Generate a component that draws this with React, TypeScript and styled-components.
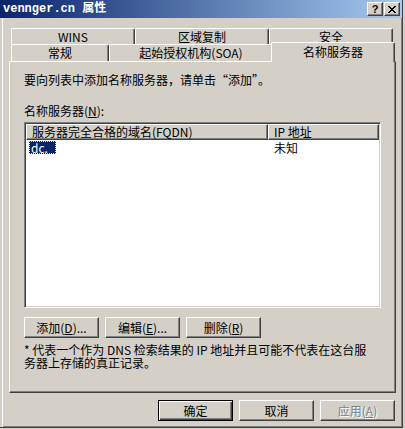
import React from 'react';
import styled, { createGlobalStyle, css } from 'styled-components';

const face = '#D4D0C8';
const shadow = '#808080';
const dark = '#404040';
const cjk = '"Noto Sans CJK SC", "Liberation Sans", sans-serif';

const GlobalStyle = createGlobalStyle`
  html, body {
    margin: 0;
    padding: 0;
    background: ${face};
    overflow: hidden;
  }
  body {
    font-family: ${cjk};
    font-size: 12px;
    color: #000;
  }
`;

const Window = styled.div`
  width: 403px;
  height: 428px;
  box-sizing: border-box;
  display: flex;
  flex-direction: column;
  background: ${face};
  border-right: 1px solid ${dark};
  border-bottom: 1px solid ${dark};
  box-shadow: inset 2px 0 0 ${face}, inset 3px 0 0 #fff,
    inset -1px -1px 0 ${shadow};
`;

const TitleBar = styled.div`
  height: 18px;
  flex: none;
  display: flex;
  align-items: center;
  justify-content: space-between;
  padding: 0 2px 0 3px;
  background: linear-gradient(to right, #0a246a, #a6caf0);
`;

const Title = styled.span`
  font-family: "Liberation Mono", "Noto Sans CJK SC", monospace;
  font-weight: bold;
  font-size: 12px;
  line-height: 14px;
  color: #fff;
`;

const CaptionButtons = styled.div`
  display: flex;
  gap: 1px;
`;

const CaptionButton = styled.div`
  width: 16px;
  height: 14px;
  box-sizing: border-box;
  display: flex;
  align-items: center;
  justify-content: center;
  background: ${face};
  border: 1px solid;
  border-color: #fff ${dark} ${dark} #fff;
  box-shadow: inset -1px -1px 0 ${shadow};
  font-family: "Liberation Sans", sans-serif;
  font-weight: bold;
  font-size: 11px;
  line-height: 11px;
  color: #000;
`;

const Body = styled.div`
  flex: 1;
  display: flex;
  flex-direction: column;
  padding: 10px 6px 0 9px;
`;

const Tabs = styled.div`
  padding-left: 2px;
  display: flex;
  flex-direction: column;
`;

const TabRow = styled.div<{ $h: number }>`
  display: flex;
  height: ${({ $h }) => $h}px;
`;

const Tab = styled.div<{ $w: number; $active?: boolean }>`
  width: ${({ $w }) => $w}px;
  flex: none;
  box-sizing: border-box;
  height: 100%;
  display: flex;
  align-items: center;
  justify-content: center;
  background: ${face};
  border-top: 1px solid #fff;
  border-left: 1px solid #fff;
  border-right: 1px solid ${dark};
  border-radius: 2px 2px 0 0;
  box-shadow: inset -1px 0 0 ${shadow};
  line-height: 12px;
  white-space: nowrap;
  ${({ $active }) =>
    $active &&
    css`
      position: relative;
      z-index: 1;
      height: auto;
      margin: -2px -2px -1px -2px;
      width: ${({ $w }: { $w: number }) => $w + 4}px;
      padding-bottom: 2px;
    `}
`;

const Panel = styled.div`
  height: 332px;
  box-sizing: border-box;
  border-top: 1px solid #fff;
  border-left: 1px solid #fff;
  border-right: 1px solid ${dark};
  border-bottom: 1px solid ${dark};
  box-shadow: inset -1px -1px 0 ${shadow};
  padding: 11px 14px 0 14px;
  display: flex;
  flex-direction: column;
`;

const Text = styled.div<{ $mt?: number }>`
  line-height: 14px;
  margin-top: ${({ $mt }) => $mt ?? 0}px;
  white-space: nowrap;
`;

const ListView = styled.div`
  margin-top: 4px;
  width: 357px;
  height: 186px;
  box-sizing: border-box;
  background: #fff;
  border: 1px solid;
  border-color: ${shadow} #fff #fff ${shadow};
  box-shadow: inset 1px 1px 0 ${dark}, inset -1px -1px 0 ${face};
  padding: 1px;
`;

const ListGrid = styled.div`
  display: grid;
  grid-template-columns: 242px 111px;
`;

const HeaderCell = styled.div`
  height: 16px;
  box-sizing: border-box;
  background: ${face};
  border-top: 1px solid #fff;
  border-left: 1px solid #fff;
  border-right: 1px solid ${dark};
  border-bottom: 1px solid ${dark};
  box-shadow: inset -1px -1px 0 ${shadow};
  padding-left: 5px;
  line-height: 14px;
  white-space: nowrap;
`;

const Cell = styled.div<{ $pl: number }>`
  height: 14px;
  padding-left: ${({ $pl }) => $pl}px;
  padding-top: 1px;
  line-height: 13px;
  white-space: nowrap;
`;

const Selected = styled.span`
  display: inline-block;
  width: 27px;
  height: 13px;
  box-sizing: border-box;
  padding-left: 1px;
  background: #0a246a;
  color: #fff;
  border: 1px dotted #e8e4a0;
  line-height: 11px;
`;

const ButtonRow = styled.div<{ $end?: boolean; $mt?: number }>`
  display: flex;
  gap: 6px;
  margin-top: ${({ $mt }) => $mt ?? 0}px;
  justify-content: ${({ $end }) => ($end ? 'flex-end' : 'flex-start')};
`;

const Button = styled.div<{ $default?: boolean; $disabled?: boolean }>`
  width: 75px;
  height: 21px;
  box-sizing: border-box;
  display: flex;
  align-items: center;
  justify-content: center;
  background: ${face};
  border: 1px solid;
  border-color: #fff ${dark} ${dark} #fff;
  box-shadow: inset -1px -1px 0 ${shadow};
  line-height: 14px;
  white-space: nowrap;
  ${({ $default }) =>
    $default &&
    css`
      border-color: #000;
      box-shadow: inset 1px 1px 0 #fff, inset -1px -1px 0 ${dark},
        inset -2px -2px 0 ${shadow};
    `}
  ${({ $disabled }) =>
    $disabled &&
    css`
      color: ${shadow};
      text-shadow: 1px 1px 0 #fff;
    `}
`;

const Footnote = styled.div`
  margin-top: 5px;
  line-height: 13px;
  white-space: nowrap;
`;

const Footer = styled.div`
  margin-top: 7px;
  padding-right: 1px;
`;

const CloseIcon = () => (
  <svg width="8" height="7" viewBox="0 0 8 7" shapeRendering="crispEdges">
    <path
      d="M0 0h2v1h-2zM6 0h2v1h-2zM1 1h2v1h-2zM5 1h2v1h-2zM2 2h4v1h-4zM3 3h2v1h-2zM2 4h4v1h-4zM1 5h2v1h-2zM5 5h2v1h-2zM0 6h2v1h-2zM6 6h2v1h-2z"
      fill="#000"
    />
  </svg>
);

export default function App() {
  return (
    <>
      <GlobalStyle />
      <Window>
        <TitleBar>
          <Title>vennger.cn 属性</Title>
          <CaptionButtons>
            <CaptionButton>?</CaptionButton>
            <CaptionButton>
              <CloseIcon />
            </CaptionButton>
          </CaptionButtons>
        </TitleBar>
        <Body>
          <Tabs>
            <TabRow $h={16}>
              <Tab $w={124}>WINS</Tab>
              <Tab $w={134}>区域复制</Tab>
              <Tab $w={124}>安全</Tab>
            </TabRow>
            <TabRow $h={17}>
              <Tab $w={98}>常规</Tab>
              <Tab $w={164}>起始授权机构(SOA)</Tab>
              <Tab $w={120} $active>
                名称服务器
              </Tab>
            </TabRow>
          </Tabs>
          <Panel>
            <Text>要向列表中添加名称服务器，请单击“添加”。</Text>
            <Text $mt={17}>
              名称服务器(<u>N</u>):
            </Text>
            <ListView>
              <ListGrid>
                <HeaderCell>服务器完全合格的域名(FQDN)</HeaderCell>
                <HeaderCell>IP 地址</HeaderCell>
                <Cell $pl={3}>
                  <Selected>dc.</Selected>
                </Cell>
                <Cell $pl={6}>未知</Cell>
              </ListGrid>
            </ListView>
            <ButtonRow $mt={9}>
              <Button>
                添加(<u>D</u>)...
              </Button>
              <Button>
                编辑(<u>E</u>)...
              </Button>
              <Button>
                删除(<u>R</u>)
              </Button>
            </ButtonRow>
            <Footnote>
              * 代表一个作为 DNS 检索结果的 IP 地址并且可能不代表在这台服
              <br />
              务器上存储的真正记录。
            </Footnote>
          </Panel>
          <Footer>
            <ButtonRow $end>
              <Button $default>确定</Button>
              <Button>取消</Button>
              <Button $disabled>
                应用(<u>A</u>)
              </Button>
            </ButtonRow>
          </Footer>
        </Body>
      </Window>
    </>
  );
}
